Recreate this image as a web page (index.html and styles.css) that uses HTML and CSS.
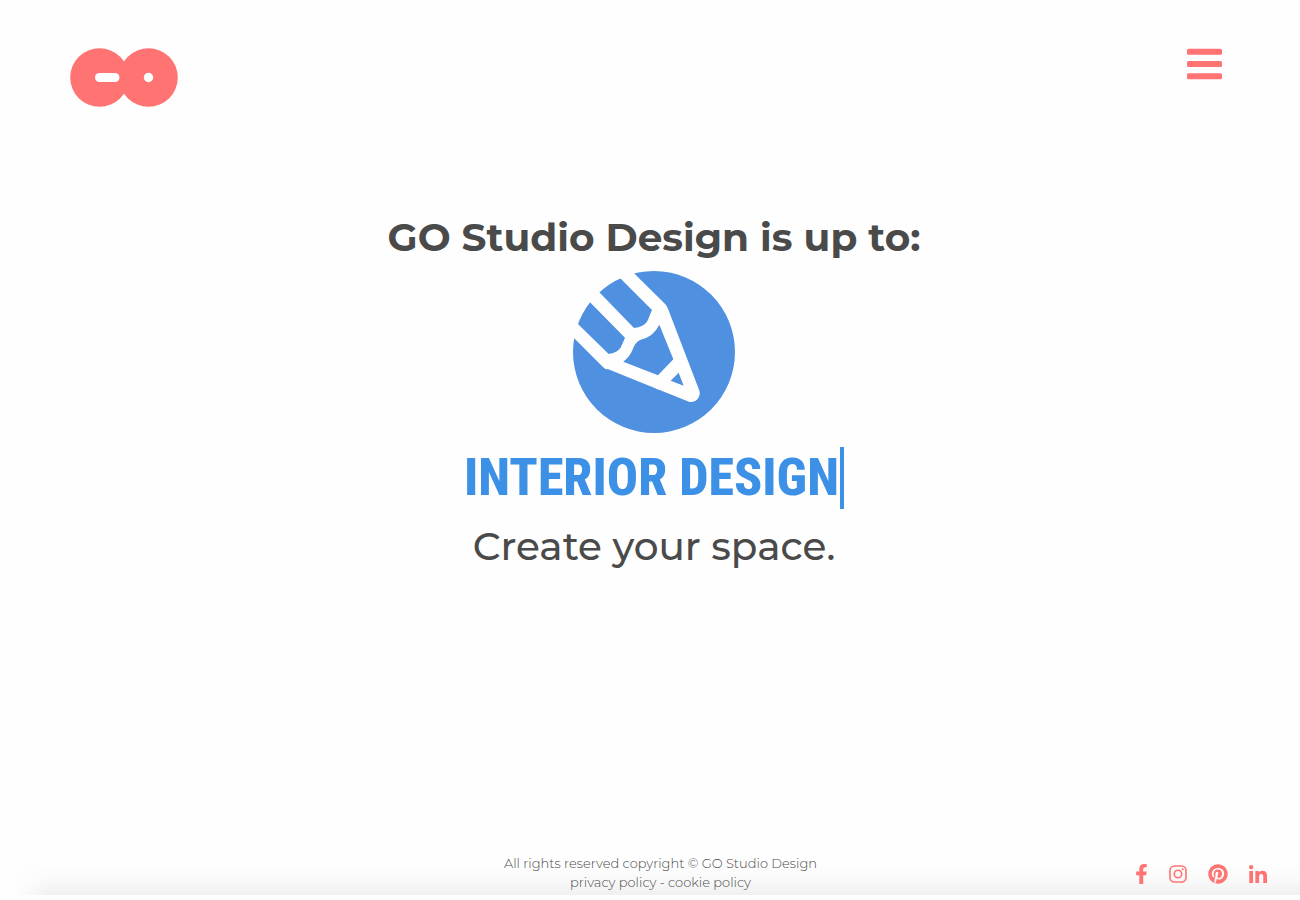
FILE: index.html
```
<!DOCTYPE html>
<html lang="en">
<head>
<meta charset="utf-8">
<meta name="viewport" content="width=device-width, initial-scale=1">
<title>GO Studio Design</title>
<link rel="stylesheet" href="styles.css">
</head>
<body>
<header class="header">
  <a class="logo" href="#" aria-label="GO Studio Design home">
    <svg viewBox="0 0 108 60" width="108" height="60" aria-hidden="true">
      <g fill="#ff7373"><circle cx="29.5" cy="29.500" r="29.3"/><circle cx="78.5" cy="29.500" r="29.3"/></g>
      <rect x="25" y="25" width="24.500" height="9" rx="4.500" fill="#fff"/>
      <circle cx="78.500" cy="29.500" r="4.700" fill="#fff"/>
    </svg>
  </a>
  <button class="menu" type="button" aria-label="Open menu">
    <svg viewBox="0 0 36 32" width="36" height="32" aria-hidden="true" fill="#ff7373">
      <rect x="1" y="0.700" width="35" height="6" rx="1.500"/><rect x="1" y="13" width="35" height="6" rx="1.500"/><rect x="1" y="25.200" width="35" height="6" rx="1.500"/>
    </svg>
  </button>
</header>
<main class="hero">
  <h1 class="title">GO Studio Design is up to:</h1>
  <svg class="pencil" viewBox="0 0 570 555" width="190" height="185" aria-hidden="true">
    <defs><clipPath id="disc"><circle cx="285" cy="276" r="243"/></clipPath></defs>
    <circle cx="285" cy="276" r="243" fill="#4f90e1"/>
    <g transform="translate(3 0)">
      <path fill="#fefefe" d="M165 -17 L316 133 Q321 138 324 146 L417 389 Q423 405 413 417 Q403 429 387 425 L299 390 Q291 389 284 384 L145 328 Q134 328 128 320 L-20 172Z"/>
    </g>
    <g clip-path="url(#disc)" fill="#4f90e1">
      <g transform="translate(3 0)">
        <path d="M298 194 L340 298 L294 346 L190 305 Q209 291 217 271 Q226 246 240 240 Q281 230 298 194Z"/>
        <path d="M356 338 L371 377 L332 362Z"/>
        <path d="M150 24 L180 54 L276 150 L268 169 Q263 190 247 197 Q236 203 222 204 L118 97 L88 66Z"/>
        <path d="M90 127 L195 233 L187 252 Q180 277 146 282 L53 191 L18 156 L60 97Z"/>
      </g>
    </g>
  </svg>
  <p class="service">INTERIOR DESIGN</p>
  <p class="tagline">Create your space.</p>
</main>
<footer class="footer">
  <div class="legal">
    <p>All rights reserved copyright © GO Studio Design</p>
    <p><a href="#">privacy policy</a> - <a href="#">cookie policy</a></p>
  </div>
  <nav class="social" aria-label="Social media">
    <a href="#" aria-label="Facebook"><svg viewBox="0 0 320 512" width="13" height="20"><path d="M279 288l14-93h-89v-60c0-25 12-50 52-50h41V7s-37-7-72-7c-73 0-121 45-121 125v70H23v93h81v224h100V288z"/></svg></a>
    <a href="#" aria-label="Instagram"><svg viewBox="0 0 18 18" width="18" height="18"><rect x="1" y="1" width="16" height="16" rx="4.500" fill="none" stroke="#ff7373" stroke-width="1.600"/><circle cx="9" cy="9" r="3.700" fill="none" stroke="#ff7373" stroke-width="1.600"/><circle cx="13.700" cy="4.300" r="1.100"/></svg></a>
    <a href="#" aria-label="Pinterest"><svg viewBox="0 0 496 512" width="20" height="20"><path d="M496 256c0 137-111 248-248 248-25.600 0-50.200-3.900-73.400-11.100 10.100-16.500 25.200-43.500 30.800-65 3-11.600 15.400-59 15.400-59 8.100 15.400 31.700 28.500 56.800 28.500 74.800 0 128.700-68.800 128.700-154.300 0-81.900-66.900-143.200-152.900-143.200-107 0-163.900 71.800-163.900 150.100 0 36.400 19.400 81.700 50.300 96.100 4.700 2.200 7.200 1.200 8.300-3.300.8-3.400 5-20.300 6.900-28.100.6-2.500.3-4.700-1.700-7.100-10.100-12.500-18.300-35.300-18.300-56.600 0-54.700 41.400-107.600 112-107.600 60.900 0 103.600 41.500 103.600 100.900 0 67.100-33.900 113.600-78 113.600-24.300 0-42.600-20.100-36.700-44.800 7-29.500 20.500-61.300 20.500-82.600 0-19-10.200-34.900-31.400-34.900-24.900 0-44.900 25.700-44.900 60.200 0 22 7.400 36.800 7.400 36.800s-24.500 103.800-29 123.200c-5 21.400-3 51.600-.9 71.200C65.400 450.900 0 361.100 0 256 0 119 111 8 248 8s248 111 248 248z"/></svg></a>
    <a href="#" aria-label="LinkedIn"><svg viewBox="0 0 448 448" width="18" height="18"><path d="M100 448H7V149h93zM54 108C24 108 0 83 0 54a54 54 0 01108 0c0 29-24 54-54 54zM448 448h-93V302c0-34-1-79-48-79-49 0-56 38-56 77v148h-93V149h89v41h1c13-24 43-48 88-48 94 0 112 62 112 142z"/></svg></a>
  </nav>
</footer>
</body>
</html>
```
FILE: styles.css
```
* { box-sizing: border-box; }
body {
  margin: 0;
  min-height: 100vh;
  display: flex;
  flex-direction: column;
  background: #fefefe;
  color: #4a4a4a;
  font-family: Montserrat, Inter, sans-serif;
}
h1, p { margin: 0; }
a { color: inherit; text-decoration: none; }
svg { display: block; }
.header {
  display: flex;
  justify-content: space-between;
  align-items: flex-start;
  padding: 48px 78px 0 70px;
}
.menu { padding: 0; border: 0; background: none; cursor: pointer; }
.hero {
  flex: 1;
  display: flex;
  flex-direction: column;
  align-items: center;
  padding: 103px 0 0 8px;
}
.title { font-size: 39px; line-height: 52px; font-weight: 700; }
.pencil { margin-top: -3px; }
.service {
  margin-top: 2px;
  padding-right: 1px;
  border-right: 4px solid #3c91e6;
  color: #3c91e6;
  font: 800 52px/62px "Roboto Condensed", "Liberation Sans Narrow", Roboto, sans-serif;
}
.tagline { margin-top: 12px; font-size: 39px; line-height: 50px; font-weight: 500; }
.footer {
  display: grid;
  grid-template-columns: 1fr auto 1fr;
  margin-bottom: 5px;
  padding: 0 33px 3px;
  background: linear-gradient(90deg, #fefefe 1%, #fefefe00 4%), linear-gradient(#fefefe 20%, #f9f9f9 65%, #f0f0f0);
}
.legal {
  grid-column: 2;
  padding-left: 21px;
  text-align: center;
  font-size: 13px;
  line-height: 19px;
  font-weight: 300;
}
.social {
  display: flex;
  align-items: center;
  justify-content: flex-end;
  gap: 21px;
  padding-top: 2px;
  fill: #ff7373;
}
```
